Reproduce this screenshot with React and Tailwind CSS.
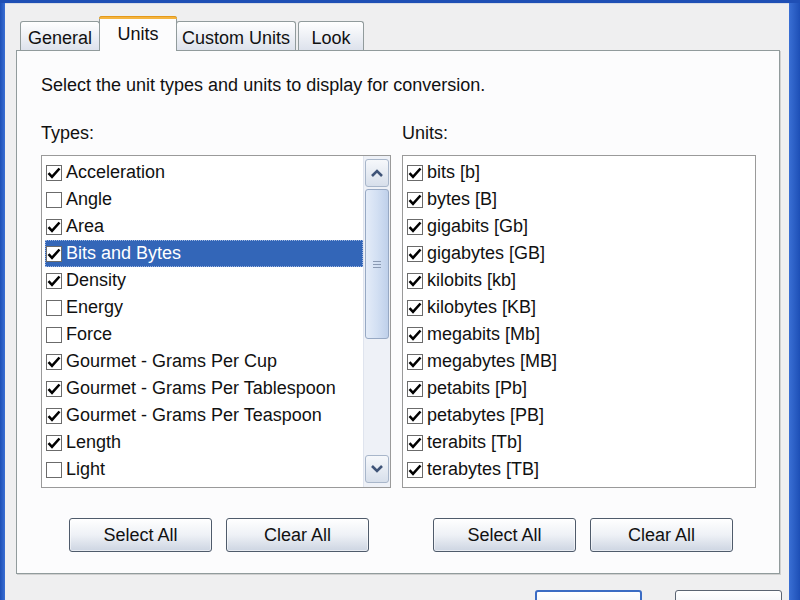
import React from "react";

const types = [
  ["Acceleration", true],
  ["Angle", false],
  ["Area", true],
  ["Bits and Bytes", true, true],
  ["Density", true],
  ["Energy", false],
  ["Force", false],
  ["Gourmet - Grams Per Cup", true],
  ["Gourmet - Grams Per Tablespoon", true],
  ["Gourmet - Grams Per Teaspoon", true],
  ["Length", true],
  ["Light", false],
];

const units = [
  "bits [b]",
  "bytes [B]",
  "gigabits [Gb]",
  "gigabytes [GB]",
  "kilobits [kb]",
  "kilobytes [KB]",
  "megabits [Mb]",
  "megabytes [MB]",
  "petabits [Pb]",
  "petabytes [PB]",
  "terabits [Tb]",
  "terabytes [TB]",
];

function Check({ on }) {
  return (
    <span className="relative w-[16px] h-[16px] shrink-0 border border-[#6b6b6b] bg-white">
      {on && (
        <svg width="16" height="16" viewBox="0 0 16 16" className="absolute left-[-1px] top-[-1px]">
          <path d="M2.5 8.2 L6 11.8 L13.5 3.5" fill="none" stroke="#000" strokeWidth="2.6" strokeLinejoin="miter" />
        </svg>
      )}
    </span>
  );
}

function Row({ label, on, sel }) {
  return (
    <div
      className={
        "flex items-center h-[27px] gap-[4px] pl-[1px] " +
        (sel ? "bg-[#3366b8] text-white outline outline-1 outline-dotted outline-[#9fb6e0] -outline-offset-1" : "text-[#111]")
      }
    >
      <Check on={on} />
      <span className="leading-[27px] whitespace-nowrap">{label}</span>
    </div>
  );
}

function Button({ children, w = "w-[143px]" }) {
  return (
    <button className={"h-[34px] " + w + " rounded-[3px] border border-[#4f5b6b] bg-linear-to-b from-[#ffffff] via-[#eef1f6] to-[#cdd5e2] text-[18px] text-[#111] shadow-[inset_0_0_0_1px_#ffffff80]"}>
      {children}
    </button>
  );
}

function Chevron({ up }) {
  return (
    <svg width="14" height="10" viewBox="0 0 14 10">
      <path d={up ? "M2 8 L7 3 L12 8" : "M2 2 L7 7 L12 2"} fill="none" stroke="#3f5478" strokeWidth="2.6" />
    </svg>
  );
}

function Tab({ label, active, w }) {
  if (active) {
    return (
      <div className={"relative z-10 " + w + " h-[35px] -mb-px bg-[#fcfcfd] border border-b-0 border-[#919b9c] rounded-t-[3px] flex flex-col"}>
        <div className="h-[3px] -mx-px -mt-px rounded-t-[3px] bg-[#f4b440] border-t border-[#e59a1a]"></div>
        <div className="flex-1 flex items-center justify-center pb-[2px] text-[18px] text-[#111]">{label}</div>
      </div>
    );
  }
  return (
    <div className={w + " h-[29px] border border-b-0 border-[#919b9c] rounded-t-[3px] bg-linear-to-b from-[#ffffff] to-[#dde2ec] flex items-center justify-center text-[18px] text-[#111] pt-[5px]"}>
      {label}
    </div>
  );
}

export default function App() {
  return (
    <div className="w-[800px] h-[600px] overflow-hidden flex flex-col bg-[#2b5cc0]" style={{ fontFamily: '"Liberation Sans", Arial, sans-serif' }}>
      <div className="h-[3px] bg-[#1f4fb5] shrink-0"></div>
      <div className="flex flex-1 min-h-0">
        <div className="w-[5px] bg-linear-to-r from-[#1d4fb6] to-[#3a6fd4] shrink-0"></div>
        <div className="flex-1 bg-[#efeff0] border-t border-[#d8dce6] flex flex-col pt-[13px] pl-[11px] pr-[9px] overflow-hidden">
          <div className="flex items-end h-[33px] pl-[4px] shrink-0">
            <Tab label="General" w="w-[80px]" />
            <div className="-mx-px"><Tab label="Units" active w="w-[78px]" /></div>
            <Tab label="Custom Units" w="w-[120px]" />
            <div className="w-[2px]"></div>
            <Tab label="Look" w="w-[66px]" />
          </div>
          <div className="h-[524px] shrink-0 border border-[#919b9c] bg-[#fcfcfd] shadow-[1px_1px_0_#d0d0d0] flex flex-col pl-[24px] pr-[23px]">
            <div className="mt-[23px] h-[22px] leading-[22px] text-[18px] text-[#111] whitespace-nowrap">
              Select the unit types and units to display for conversion.
            </div>
            <div className="flex mt-[26px] gap-[11px] text-[18px]">
              <div className="flex flex-col w-[351px]">
                <div className="h-[22px] leading-[22px] text-[#111]">Types:</div>
                <div className="mt-[11px] h-[333px] border border-[#9a9a9a] bg-white flex">
                  <div className="flex-1 pt-[3px] pl-[3px]">
                    {types.map(([l, on, sel]) => (
                      <Row key={l} label={l} on={on} sel={sel} />
                    ))}
                  </div>
                  <div className="w-[27px] bg-[#eef1f7] border-l border-[#dfe4ee] flex flex-col pt-[3px] pb-[4px] pr-[1px] pl-[1px]">
                    <div className="h-[28px] rounded-[3px] border border-[#a8b6ca] bg-linear-to-b from-[#f6f8fb] to-[#d7dfeb] flex items-center justify-center">
                      <Chevron up />
                    </div>
                    <div className="mt-[2px] h-[150px] rounded-[3px] border border-[#97a9c4] bg-linear-to-r from-[#e4ecf8] via-[#d3e0f3] to-[#bfd0ea] flex items-center justify-center">
                      <svg width="10" height="9" viewBox="0 0 10 9">
                        <path d="M1 1.5 H9 M1 4.5 H9 M1 7.5 H9" stroke="#8a9ab3" strokeWidth="1" />
                      </svg>
                    </div>
                    <div className="flex-1"></div>
                    <div className="h-[28px] rounded-[3px] border border-[#a8b6ca] bg-linear-to-b from-[#f6f8fb] to-[#d7dfeb] flex items-center justify-center">
                      <Chevron />
                    </div>
                  </div>
                </div>
                <div className="mt-[30px] flex gap-[14px] pl-[28px]">
                  <Button>Select All</Button>
                  <Button>Clear All</Button>
                </div>
              </div>
              <div className="flex flex-col w-[355px]">
                <div className="h-[22px] leading-[22px] text-[#111]">Units:</div>
                <div className="mt-[11px] h-[333px] border border-[#9a9a9a] bg-white pt-[3px] pl-[3px]">
                  {units.map((l) => (
                    <Row key={l} label={l} on />
                  ))}
                </div>
                <div className="mt-[30px] flex gap-[14px] pl-[31px]">
                  <Button>Select All</Button>
                  <Button>Clear All</Button>
                </div>
              </div>
            </div>
          </div>
          <div className="flex justify-end gap-[33px] mt-[16px] mr-[-2px] shrink-0">
            <button className="h-[34px] w-[107px] shrink-0 rounded-[3px] border-2 border-[#3b6cc4] bg-linear-to-b from-[#ffffff] to-[#dfe5ee] text-[18px] text-[#111]">OK</button>
            <button className="h-[34px] w-[107px] shrink-0 rounded-[3px] border border-[#5a6472] bg-linear-to-b from-[#ffffff] to-[#dfe5ee] text-[18px] text-[#111]">Cancel</button>
          </div>
        </div>
        <div className="w-[11px] bg-linear-to-r from-[#3a6fd4] to-[#1d4fb6] shrink-0"></div>
      </div>
    </div>
  );
}
